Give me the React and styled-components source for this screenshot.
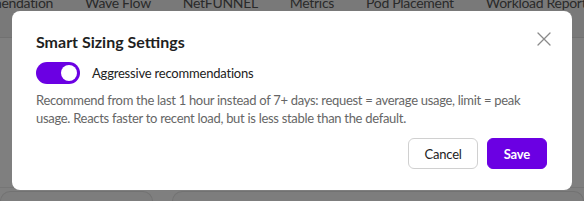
import React, { useState } from 'react';
import styled, { createGlobalStyle } from 'styled-components';

const GlobalStyle = createGlobalStyle`
  html, body {
    margin: 0;
    padding: 0;
    background: #ffffff;
    font-family: Lato, "Noto Sans", sans-serif;
    overflow: hidden;
  }
`;

const tabs = ['Recommendation', 'Wave Flow', 'NetFUNNEL', 'Metrics', 'Pod Placement', 'Workload Report'];

const Page = styled.div`
  width: 584px;
  height: 201px;
  overflow: hidden;
  display: flex;
  flex-direction: column;
`;

const TabBar = styled.div`
  height: 43px;
  margin-top: -6px;
  margin-left: -50px;
  display: flex;
  align-items: flex-start;
  gap: 32px;
  background: #f3f3f3;
  border-bottom: 1px solid #e2e2e2;
  white-space: nowrap;
`;

const Tab = styled.span`
  font-size: 14px;
  line-height: 18px;
  letter-spacing: -0.3px;
  color: #555555;
`;

const Body = styled.div`
  flex: 1;
  display: flex;
  flex-direction: column;
  justify-content: flex-end;
`;

const CardRow = styled.div`
  border-top: 1px solid #ececec;
  padding-top: 3px;
  display: grid;
  grid-template-columns: 153px 1fr;
  gap: 19px;
  height: 10px;
`;

const Card = styled.div`
  border: 1px solid #e4e4e4;
  border-bottom: none;
  border-radius: 10px 10px 0 0;
  background: #fafafa;
`;

const Overlay = styled.div`
  position: fixed;
  inset: 0;
  background: rgba(0, 0, 0, 0.5);
  display: flex;
  justify-content: center;
  align-items: flex-start;
  padding-top: 11px;
`;

const Modal = styled.div`
  position: relative;
  box-sizing: border-box;
  width: 560px;
  background: #ffffff;
  border-radius: 8px;
  padding: 21px 25px 21px 24px;
  display: flex;
  flex-direction: column;
`;

const Title = styled.h2`
  margin: 0;
  font-size: 16px;
  line-height: 20px;
  font-weight: 700;
  color: #1f1f1f;
`;

const CloseButton = styled.button`
  position: absolute;
  top: 16px;
  right: 16px;
  width: 24px;
  height: 24px;
  padding: 0;
  border: none;
  background: transparent;
  display: flex;
  align-items: center;
  justify-content: center;
  cursor: pointer;
`;

const ToggleRow = styled.label`
  display: flex;
  align-items: center;
  gap: 12px;
  margin-top: 10px;
  cursor: pointer;
`;

const Track = styled.span`
  width: 44px;
  height: 22px;
  border-radius: 11px;
  background: ${(p) => (p.$on ? '#6b00e3' : '#c9c9c9')};
  display: flex;
  align-items: center;
  justify-content: ${(p) => (p.$on ? 'flex-end' : 'flex-start')};
  padding: 0 3px;
  box-sizing: border-box;
`;

const Knob = styled.span`
  width: 16px;
  height: 16px;
  border-radius: 50%;
  background: #ffffff;
`;

const ToggleLabel = styled.span`
  font-size: 13px;
  letter-spacing: -0.2px;
  color: #222222;
`;

const Description = styled.p`
  margin: 8px 0 0;
  font-size: 13px;
  line-height: 17.5px;
  letter-spacing: -0.3px;
  color: #666666;
  max-width: 495px;
`;

const Actions = styled.div`
  display: flex;
  justify-content: flex-end;
  gap: 9px;
  margin-top: 11px;
`;

const Button = styled.button`
  height: 31px;
  padding: 0 ${(p) => (p.$primary ? '16px' : '15px')};
  border-radius: 6px;
  font-family: inherit;
  font-size: 13px;
  letter-spacing: -0.2px;
  font-weight: ${(p) => (p.$primary ? 700 : 400)};
  cursor: pointer;
  border: 1px solid ${(p) => (p.$primary ? '#6b00e3' : '#d0d0d0')};
  background: ${(p) => (p.$primary ? '#6b00e3' : '#ffffff')};
  color: ${(p) => (p.$primary ? '#ffffff' : '#222222')};
`;

export default function App() {
  const [on, setOn] = useState(true);
  return (
    <>
      <GlobalStyle />
      <Page>
        <TabBar>
          {tabs.map((t) => (
            <Tab key={t}>{t}</Tab>
          ))}
        </TabBar>
        <Body>
          <CardRow>
            <Card />
            <Card />
          </CardRow>
        </Body>
      </Page>
      <Overlay>
        <Modal>
          <Title>Smart Sizing Settings</Title>
          <CloseButton aria-label="Close">
            <svg width="14" height="14" viewBox="0 0 14 14" fill="none">
              <path d="M1 1L13 13M13 1L1 13" stroke="#8a8a8a" strokeWidth="1.3" strokeLinecap="round" />
            </svg>
          </CloseButton>
          <ToggleRow onClick={() => setOn(!on)}>
            <Track $on={on}>
              <Knob />
            </Track>
            <ToggleLabel>Aggressive recommendations</ToggleLabel>
          </ToggleRow>
          <Description>
            Recommend from the last 1 hour instead of 7+ days: request = average usage, limit = peak usage. Reacts
            faster to recent load, but is less stable than the default.
          </Description>
          <Actions>
            <Button>Cancel</Button>
            <Button $primary>Save</Button>
          </Actions>
        </Modal>
      </Overlay>
    </>
  );
}
